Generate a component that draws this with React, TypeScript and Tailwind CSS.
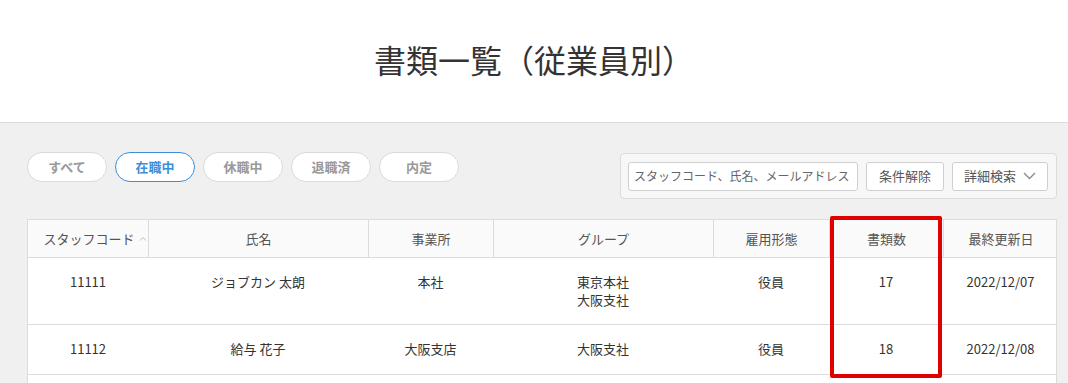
import React from "react";

const cols = "grid grid-cols-[120px_220px_125px_220px_116px_114px_115px]";

function ChevronUp() {
  return (
    <svg width="8" height="6" viewBox="0 0 8 6" className="ml-[4px] mt-[1px]">
      <path d="M1 4.5 L4 1.5 L7 4.5" fill="none" stroke="#bbb" strokeWidth="1" />
    </svg>
  );
}

function ChevronDown() {
  return (
    <svg width="13" height="8" viewBox="0 0 13 8" className="ml-[7px]">
      <path d="M1 1 L6.5 6.5 L12 1" fill="none" stroke="#888" strokeWidth="1.3" />
    </svg>
  );
}

const pills = ["すべて", "在職中", "休職中", "退職済", "内定"];

type Row = { code: string; name: string; office: string; groups: string[]; type: string; docs: string; date: string };
const rows: Row[] = [
  { code: "11111", name: "ジョブカン 太朗", office: "本社", groups: ["東京本社", "大阪支社"], type: "役員", docs: "17", date: "2022/12/07" },
  { code: "11112", name: "給与 花子", office: "大阪支店", groups: ["大阪支社"], type: "役員", docs: "18", date: "2022/12/08" },
];

export default function App() {
  return (
    <div className="w-[1068px] h-[383px] overflow-hidden bg-[#f0f0f0] font-['Noto_Sans_CJK_JP','Noto_Sans',sans-serif]">
      <header className="h-[123px] bg-white border-b border-[#dcdcdc] flex items-center justify-center pb-[4px]">
        <h1 className="text-[32px] leading-[40px] text-[#333] font-normal">書類一覧（従業員別）</h1>
      </header>
      <main className="pl-[27px] pr-[11px] pt-[29px]">
        <div className="flex justify-between items-start">
          <div className="flex gap-[8px]">
            {pills.map((p, i) => (
              <div
                key={p}
                className={
                  i === 1
                    ? "w-[80px] h-[30px] rounded-full bg-white border border-[#3b8fd9] text-[#3b8fd9] text-[13px] font-bold flex items-center justify-center"
                    : "w-[80px] h-[30px] rounded-full bg-white border border-[#dadada] text-[#999] text-[13px] font-bold flex items-center justify-center"
                }
              >
                {p}
              </div>
            ))}
          </div>
          <div className="mt-[1px] w-[437px] h-[46px] bg-[#f7f7f7] border border-[#dcdcdc] rounded-[4px] flex items-center pl-[7px] gap-[8px]">
            <div className="w-[230px] h-[29px] bg-white border border-[#cfcfcf] rounded-[3px] flex items-center pl-[5px] text-[12px] text-[#666] whitespace-nowrap overflow-hidden">
              スタッフコード、氏名、メールアドレス
            </div>
            <div className="w-[78px] h-[29px] bg-white border border-[#cfcfcf] rounded-[3px] flex items-center justify-center text-[13px] text-[#555]">
              条件解除
            </div>
            <div className="w-[96px] h-[29px] bg-white border border-[#cfcfcf] rounded-[3px] flex items-center justify-center text-[13px] text-[#555]">
              詳細検索
              <ChevronDown />
            </div>
          </div>
        </div>

        <div className="relative mt-[20px] w-[1030px]">
          <div className="bg-white border border-[#dcdcdc] text-[13px]">
            <div className={`${cols} h-[38px] bg-[#fafafa] border-b border-[#dcdcdc] text-[#555]`}>
              <div className="flex items-center justify-center pl-[14px]">
                スタッフコード
                <ChevronUp />
              </div>
              {["氏名", "事業所", "グループ", "雇用形態", "書類数", "最終更新日"].map((h) => (
                <div key={h} className="flex items-center justify-center border-l border-[#dcdcdc]">
                  {h}
                </div>
              ))}
            </div>
            {rows.map((r, i) => (
              <div
                key={r.code}
                className={`${cols} border-b border-[#dcdcdc] text-[#333] leading-[18px] ${i === 0 ? "pt-[15px] pb-[15px]" : "pt-[15px] pb-[16px]"} text-center`}
              >
                <div>{r.code}</div>
                <div>{r.name}</div>
                <div>{r.office}</div>
                <div>
                  {r.groups.map((g) => (
                    <div key={g}>{g}</div>
                  ))}
                </div>
                <div>{r.type}</div>
                <div>{r.docs}</div>
                <div>{r.date}</div>
              </div>
            ))}
            <div className="h-[20px]" />
          </div>
          <div className="absolute left-[803px] top-[-3px] w-[112px] h-[162px] border-[4px] border-[#e00000] rounded-[2px] pointer-events-none" />
        </div>
      </main>
    </div>
  );
}
